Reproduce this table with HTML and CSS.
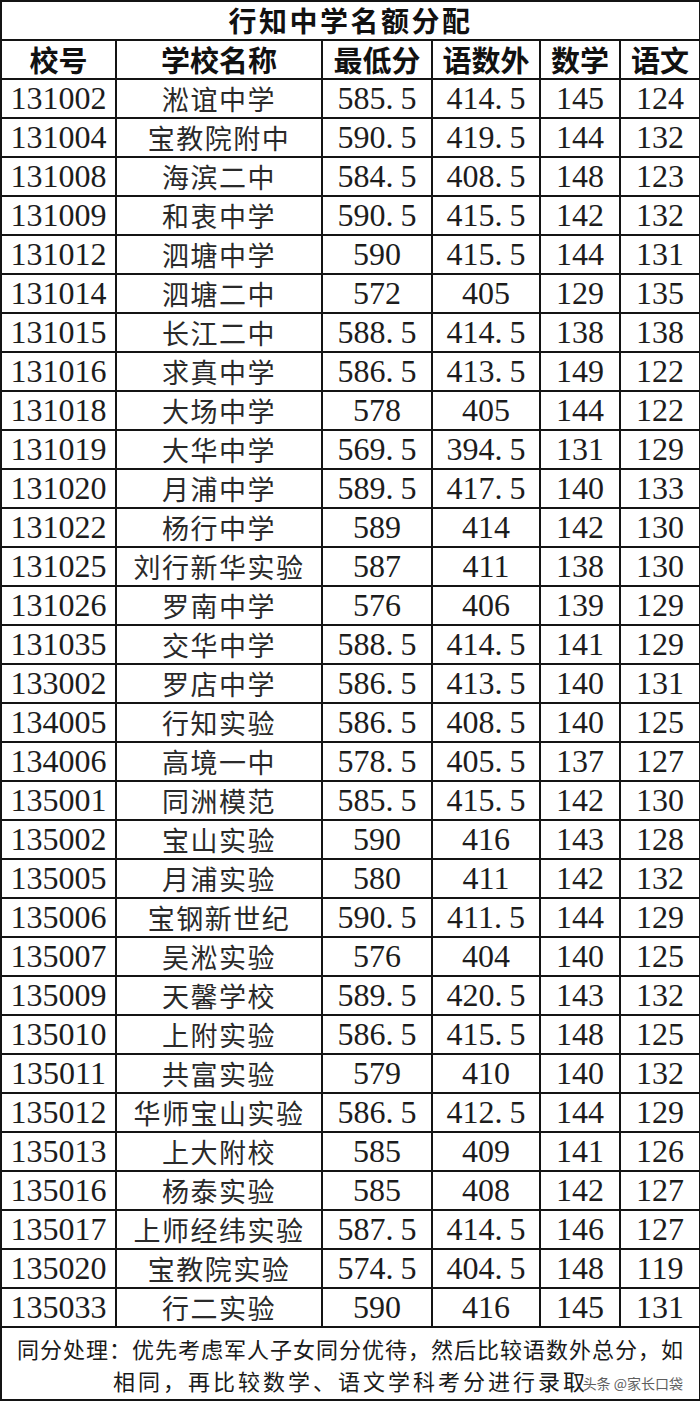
FILE: index.html
```html
<!DOCTYPE html>
<html lang="zh-CN">
<head>
<meta charset="utf-8">
<title>行知中学名额分配</title>
<link rel="stylesheet" href="styles.css">
</head>
<body>
<table class="quota">
  <colgroup>
    <col class="c-id"><col class="c-name"><col class="c-min"><col class="c-sum"><col class="c-math"><col class="c-chn">
  </colgroup>
  <thead>
    <tr class="title-row"><th colspan="6">行知中学名额分配</th></tr>
    <tr class="head-row"><th>校号</th><th>学校名称</th><th>最低分</th><th>语数外</th><th>数学</th><th>语文</th></tr>
  </thead>
  <tbody>
    <tr><td>131002</td><td>淞谊中学</td><td>585<span class="pt">.</span>5</td><td>414<span class="pt">.</span>5</td><td>145</td><td>124</td></tr>
    <tr><td>131004</td><td>宝教院附中</td><td>590<span class="pt">.</span>5</td><td>419<span class="pt">.</span>5</td><td>144</td><td>132</td></tr>
    <tr><td>131008</td><td>海滨二中</td><td>584<span class="pt">.</span>5</td><td>408<span class="pt">.</span>5</td><td>148</td><td>123</td></tr>
    <tr><td>131009</td><td>和衷中学</td><td>590<span class="pt">.</span>5</td><td>415<span class="pt">.</span>5</td><td>142</td><td>132</td></tr>
    <tr><td>131012</td><td>泗塘中学</td><td>590</td><td>415<span class="pt">.</span>5</td><td>144</td><td>131</td></tr>
    <tr><td>131014</td><td>泗塘二中</td><td>572</td><td>405</td><td>129</td><td>135</td></tr>
    <tr><td>131015</td><td>长江二中</td><td>588<span class="pt">.</span>5</td><td>414<span class="pt">.</span>5</td><td>138</td><td>138</td></tr>
    <tr><td>131016</td><td>求真中学</td><td>586<span class="pt">.</span>5</td><td>413<span class="pt">.</span>5</td><td>149</td><td>122</td></tr>
    <tr><td>131018</td><td>大场中学</td><td>578</td><td>405</td><td>144</td><td>122</td></tr>
    <tr><td>131019</td><td>大华中学</td><td>569<span class="pt">.</span>5</td><td>394<span class="pt">.</span>5</td><td>131</td><td>129</td></tr>
    <tr><td>131020</td><td>月浦中学</td><td>589<span class="pt">.</span>5</td><td>417<span class="pt">.</span>5</td><td>140</td><td>133</td></tr>
    <tr><td>131022</td><td>杨行中学</td><td>589</td><td>414</td><td>142</td><td>130</td></tr>
    <tr><td>131025</td><td>刘行新华实验</td><td>587</td><td>411</td><td>138</td><td>130</td></tr>
    <tr><td>131026</td><td>罗南中学</td><td>576</td><td>406</td><td>139</td><td>129</td></tr>
    <tr><td>131035</td><td>交华中学</td><td>588<span class="pt">.</span>5</td><td>414<span class="pt">.</span>5</td><td>141</td><td>129</td></tr>
    <tr><td>133002</td><td>罗店中学</td><td>586<span class="pt">.</span>5</td><td>413<span class="pt">.</span>5</td><td>140</td><td>131</td></tr>
    <tr><td>134005</td><td>行知实验</td><td>586<span class="pt">.</span>5</td><td>408<span class="pt">.</span>5</td><td>140</td><td>125</td></tr>
    <tr><td>134006</td><td>高境一中</td><td>578<span class="pt">.</span>5</td><td>405<span class="pt">.</span>5</td><td>137</td><td>127</td></tr>
    <tr><td>135001</td><td>同洲模范</td><td>585<span class="pt">.</span>5</td><td>415<span class="pt">.</span>5</td><td>142</td><td>130</td></tr>
    <tr><td>135002</td><td>宝山实验</td><td>590</td><td>416</td><td>143</td><td>128</td></tr>
    <tr><td>135005</td><td>月浦实验</td><td>580</td><td>411</td><td>142</td><td>132</td></tr>
    <tr><td>135006</td><td>宝钢新世纪</td><td>590<span class="pt">.</span>5</td><td>411<span class="pt">.</span>5</td><td>144</td><td>129</td></tr>
    <tr><td>135007</td><td>吴淞实验</td><td>576</td><td>404</td><td>140</td><td>125</td></tr>
    <tr><td>135009</td><td>天馨学校</td><td>589<span class="pt">.</span>5</td><td>420<span class="pt">.</span>5</td><td>143</td><td>132</td></tr>
    <tr><td>135010</td><td>上附实验</td><td>586<span class="pt">.</span>5</td><td>415<span class="pt">.</span>5</td><td>148</td><td>125</td></tr>
    <tr><td>135011</td><td>共富实验</td><td>579</td><td>410</td><td>140</td><td>132</td></tr>
    <tr><td>135012</td><td>华师宝山实验</td><td>586<span class="pt">.</span>5</td><td>412<span class="pt">.</span>5</td><td>144</td><td>129</td></tr>
    <tr><td>135013</td><td>上大附校</td><td>585</td><td>409</td><td>141</td><td>126</td></tr>
    <tr><td>135016</td><td>杨泰实验</td><td>585</td><td>408</td><td>142</td><td>127</td></tr>
    <tr><td>135017</td><td>上师经纬实验</td><td>587<span class="pt">.</span>5</td><td>414<span class="pt">.</span>5</td><td>146</td><td>127</td></tr>
    <tr><td>135020</td><td>宝教院实验</td><td>574<span class="pt">.</span>5</td><td>404<span class="pt">.</span>5</td><td>148</td><td>119</td></tr>
    <tr><td>135033</td><td>行二实验</td><td>590</td><td>416</td><td>145</td><td>131</td></tr>
  </tbody>
  <tfoot>
    <tr class="note-row">
      <td colspan="6">
        <div class="note">
          <span class="line1">同分处理：优先考虑军人子女同分优待，然后比较语数外总分，如</span><br>
          <span class="line2">相同，再比较数学、语文学科考分进行录取</span>
          <span class="mark">头条 @家长口袋</span>
        </div>
      </td>
    </tr>
  </tfoot>
</table>
</body>
</html>
```

FILE: styles.css
```css
html, body {
  margin: 0;
  padding: 0;
  background: #ffffff;
}

.quota {
  width: 699px;
  border-collapse: collapse;
  table-layout: fixed;
  font-family: "Liberation Serif", "Noto Sans CJK SC", serif;
  color: #1c1c1c;
}

.c-id { width: 115px; }
.c-name { width: 206px; }
.c-min { width: 110px; }
.c-sum { width: 108px; }
.c-math { width: 80px; }
.c-chn { width: 80px; }

.quota th,
.quota td {
  border: 2px solid #141414;
  padding: 0;
  text-align: center;
  vertical-align: middle;
  height: 37px;
  font-size: 32px;
  line-height: 37px;
  white-space: nowrap;
}

.quota th {
  font-family: "Noto Sans CJK SC", sans-serif;
  font-weight: 700;
  font-size: 29px;
  color: #111;
}

.title-row th {
  font-size: 28px;
  letter-spacing: 2.5px;
}

.quota td:nth-child(2) {
  font-family: "Noto Sans CJK SC", sans-serif;
  font-weight: 400;
  font-size: 27px;
  letter-spacing: 1.5px;
  color: #2a2a2a;
}

.pt {
  margin-right: 7px;
}

.note-row td {
  height: 71px;
  padding: 0;
  white-space: normal;
}

.note {
  position: relative;
  font-family: "Noto Sans CJK SC", sans-serif;
  font-size: 22px;
  line-height: 32px;
  text-align: center;
  color: #1a1a1a;
}

.line1 {
  letter-spacing: 1px;
}

.line2 {
  letter-spacing: 3px;
}

.mark {
  position: absolute;
  right: 16px;
  bottom: 4px;
  font-size: 14px;
  line-height: 18px;
  letter-spacing: 0;
  color: #5e5e5e;
  text-shadow: 0 0 2px #ffffff;
}
```
